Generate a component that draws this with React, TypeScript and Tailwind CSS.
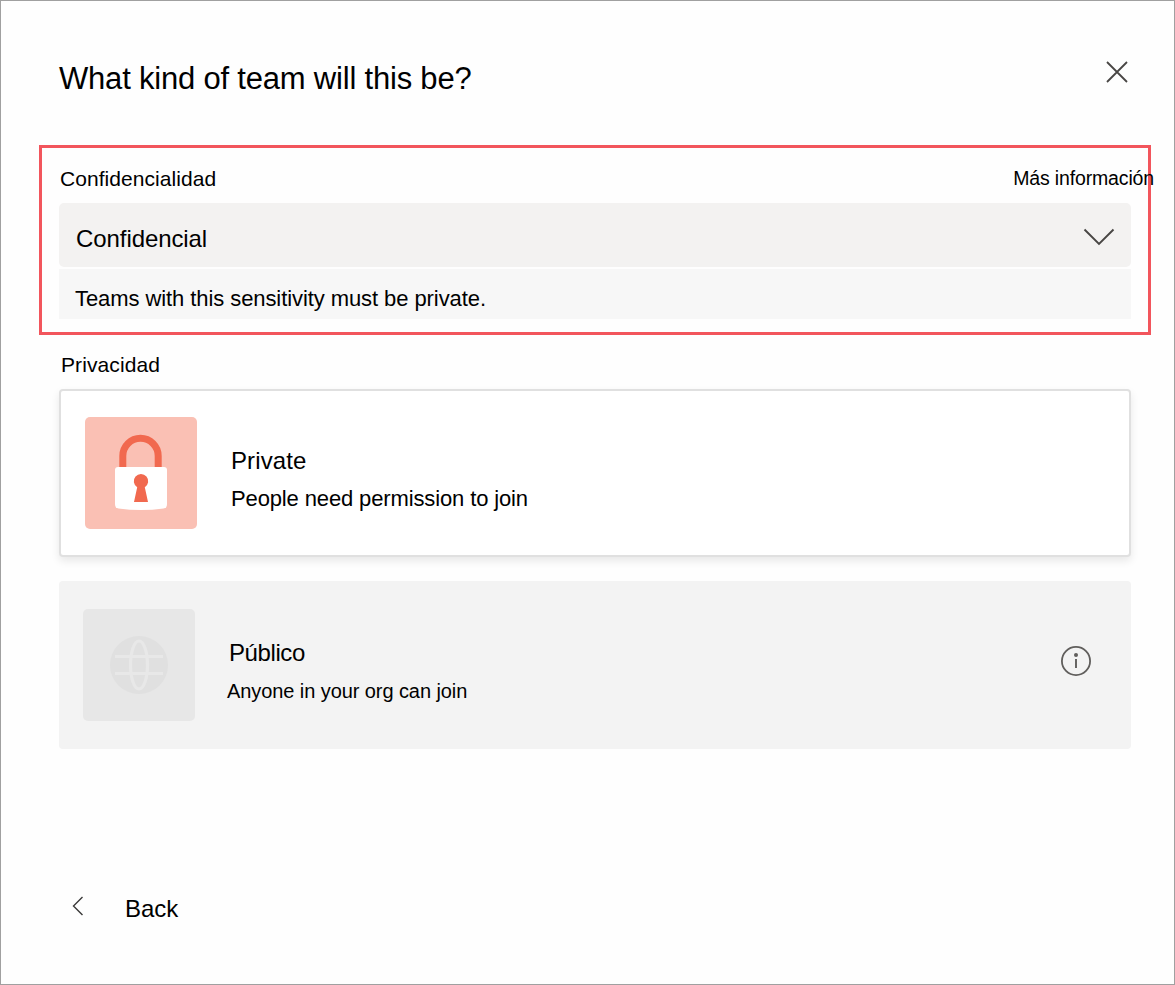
import type { ReactNode } from 'react';

function CloseIcon() {
  return (
    <svg width="22" height="22" viewBox="0 0 22 22" fill="none" stroke="#484644" strokeWidth="1.8">
      <path d="M1 1L21 21M21 1L1 21" />
    </svg>
  );
}

function ChevronDown() {
  return (
    <svg width="32" height="18" viewBox="0 0 32 18" fill="none" stroke="#484644" strokeWidth="1.9">
      <path d="M1.5 1.5L16 16L30.500 1.500" />
    </svg>
  );
}

function ChevronLeft() {
  return (
    <svg width="12" height="20" viewBox="0 0 12 20" fill="none" stroke="#3b3a39" strokeWidth="1.4">
      <path d="M10.500 1L1.500 10L10.500 19" />
    </svg>
  );
}

function LockTile() {
  return (
    <svg width="112" height="112" viewBox="0 0 112 112" className="shrink-0">
      <rect width="112" height="112" rx="5" fill="#fac0b4" />
      <path d="M37.800 52V39a17.700 17.700 0 0 1 35.400 0V52" fill="none" stroke="#f1694f" strokeWidth="7" />
      <path d="M33 50H79Q82 50 82 53V87Q82 91 78.500 91.500Q56 94.500 33.500 91.500Q30 91 30 87V53Q30 50 33 50Z" fill="#fff" />
      <path d="M59.800 70.200A7.200 7.200 0 1 0 52.200 70.200L49 85H63Z" fill="#f1694f" />
    </svg>
  );
}

function GlobeTile() {
  return (
    <svg width="112" height="112" viewBox="0 0 112 112" className="shrink-0">
      <rect width="112" height="112" rx="5" fill="#e7e7e7" />
      <circle cx="56" cy="56" r="29" fill="#e0e0e0" />
      <g fill="none" stroke="#e8e8e8" strokeWidth="3.200">
        <path d="M32 47.500H80M32 64.500H80" />
        <ellipse cx="56" cy="56" rx="8.500" ry="24" />
      </g>
    </svg>
  );
}

function InfoIcon() {
  return (
    <svg width="32" height="32" viewBox="0 0 32 32">
      <circle cx="16" cy="16" r="14.100" fill="none" stroke="#605e5c" strokeWidth="1.800" />
      <circle cx="16" cy="10" r="2" fill="#605e5c" />
      <path d="M16 14V23" stroke="#605e5c" strokeWidth="1.900" />
    </svg>
  );
}

function Line({ className, children }: { className: string; children: ReactNode }) {
  return <div className={`whitespace-nowrap ${className}`}>{children}</div>;
}

export default function App() {
  return (
    <div className="flex h-[985px] w-[1175px] flex-col overflow-hidden border border-[#a0a0a0] bg-[#fefefe] font-['Liberation_Sans',Arial,sans-serif] text-black">
      <header className="flex justify-between pt-[59px] pr-[46px] pl-[58px]">
        <Line className="h-9 pt-px text-[31px] leading-9 tracking-[-0.2px]">What kind of team will this be?</Line>
        <button className="h-[22px] pt-px" aria-label="Close">
          <CloseIcon />
        </button>
      </header>

      <section className="mt-[49px] ml-[38px] h-[190px] w-[1112px] border-[3px] border-[#f2555c] pt-[19px] pr-[17px] pl-[17px]">
        <div className="flex h-6 justify-between">
          <Line className="pl-px text-[21px] leading-6 tracking-[0.06px]">Confidencialidad</Line>
          <Line className="-mt-px -mr-[23px] text-[19.5px] leading-6 tracking-[-0.15px]">Más información</Line>
        </div>
        <button className="mt-3 flex h-16 w-full items-center justify-between rounded-[5px] bg-[#f3f2f1] pr-4 pl-[17px]">
          <Line className="pt-2 text-[24px] leading-7 tracking-[-0.08px]">Confidencial</Line>
          <span className="pt-1">
            <ChevronDown />
          </span>
        </button>
        <div className="mt-0.5 flex h-[50px] items-center bg-[#f7f7f7] pt-[9px] pl-4">
          <Line className="text-[22px] leading-6 tracking-[-0.08px]">Teams with this sensitivity must be private.</Line>
        </div>
      </section>

      <Line className="mt-[18px] pl-[60px] text-[21px] leading-6 tracking-[0.1px]">Privacidad</Line>

      <div className="mt-3 ml-[58px] flex h-[168px] w-[1072px] shrink-0 rounded-[4px] border-2 border-[#e0e0e0] bg-white pt-[26px] pl-6 shadow-[0_4px_8px_rgba(0,0,0,0.09)]">
        <LockTile />
        <div className="pt-[30px] pl-[34px]">
          <Line className="text-[24px] leading-7 tracking-[0.1px]">Private</Line>
          <Line className="mt-3 text-[22px] leading-6 tracking-[-0.13px]">People need permission to join</Line>
        </div>
      </div>

      <div className="mt-6 ml-[58px] flex h-[168px] w-[1072px] shrink-0 rounded-[4px] bg-[#f3f3f3] pt-7 pr-[39px] pl-6">
        <GlobeTile />
        <div className="flex-1 pt-[30px] pl-8">
          <Line className="pl-0.5 text-[24px] leading-7 tracking-[-0.4px]">Público</Line>
          <Line className="mt-3 text-[20px] leading-6 tracking-[-0.08px]">Anyone in your org can join</Line>
        </div>
        <span className="pt-9">
          <InfoIcon />
        </span>
      </div>

      <button className="mt-[145px] ml-[71px] flex h-[29px] items-start">
        <span className="pt-0.5">
          <ChevronLeft />
        </span>
        <Line className="pt-px pl-[41px] text-[24px] leading-7">Back</Line>
      </button>
    </div>
  );
}
